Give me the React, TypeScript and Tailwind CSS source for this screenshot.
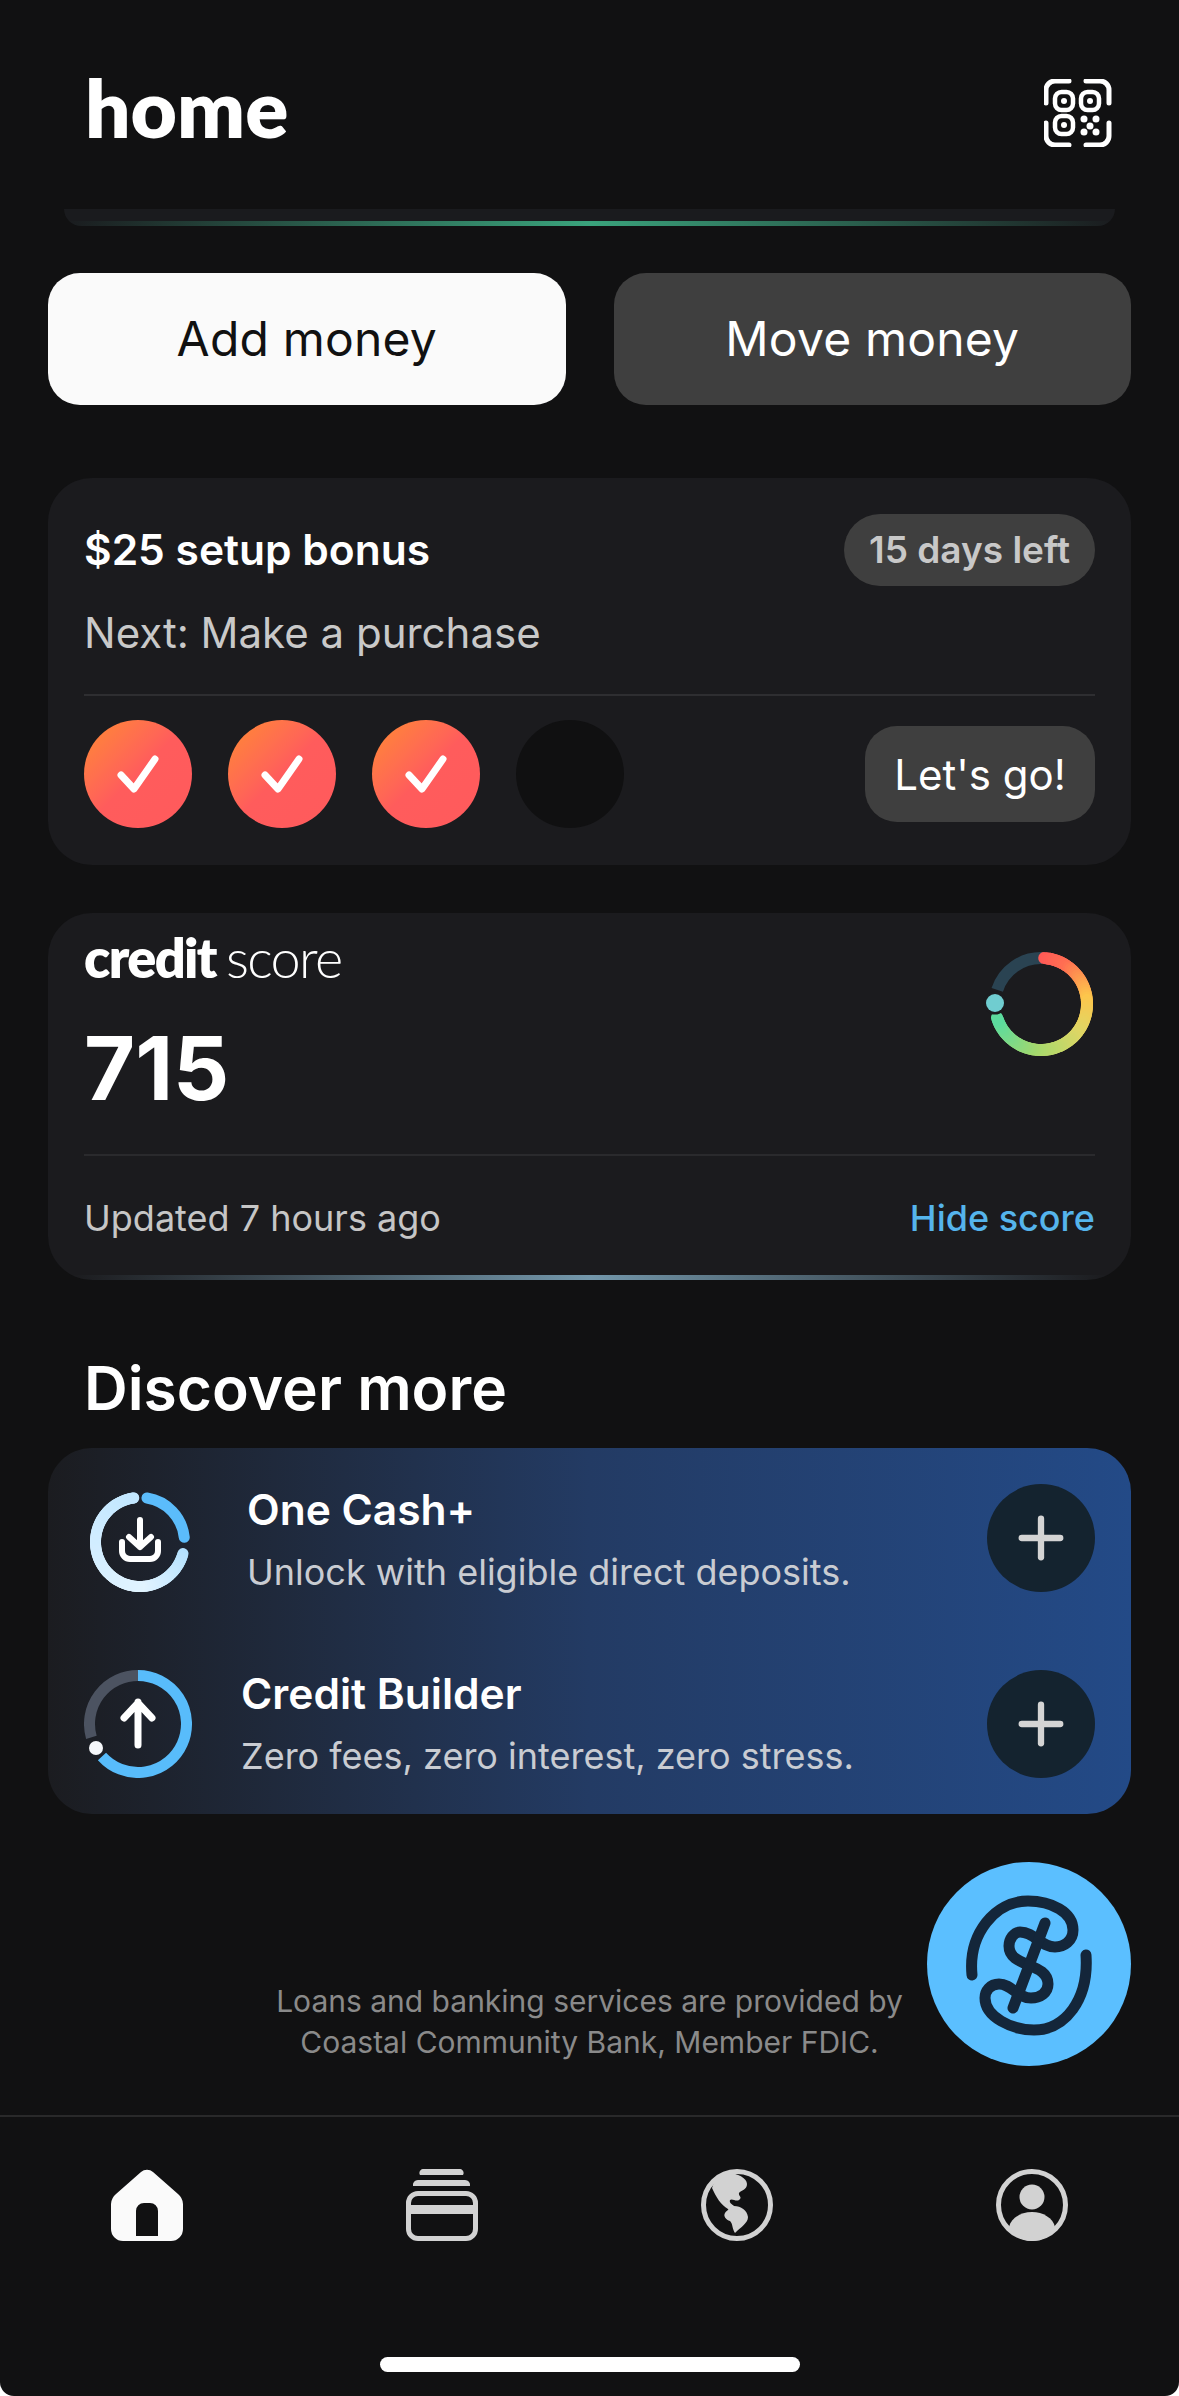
import { Plus } from "lucide-react";

type Stop = [number, string];

function hexToRgb(hex: string) {
  return [1, 3, 5].map((i) => parseInt(hex.slice(i, i + 2), 16));
}

function colorAt(stops: Stop[], t: number) {
  for (let i = 0; i < stops.length - 1; i++) {
    const [a, ca] = stops[i];
    const [b, cb] = stops[i + 1];
    if (t <= b) {
      const k = (t - a) / (b - a);
      const x = hexToRgb(ca);
      const y = hexToRgb(cb);
      return `rgb(${x.map((v, j) => Math.round(v + (y[j] - v) * k)).join(",")})`;
    }
  }
  return stops[stops.length - 1][1];
}

function polar(cx: number, cy: number, r: number, deg: number) {
  const rad = ((deg - 90) * Math.PI) / 180;
  return [cx + r * Math.cos(rad), cy + r * Math.sin(rad)];
}

function arcPath(cx: number, cy: number, r: number, from: number, to: number) {
  const [x1, y1] = polar(cx, cy, r, from);
  const [x2, y2] = polar(cx, cy, r, to);
  return `M${x1} ${y1}A${r} ${r} 0 ${to - from > 180 ? 1 : 0} 1 ${x2} ${y2}`;
}

function GradientArc(props: { cx: number; cy: number; r: number; from: number; to: number; width: number; stops: Stop[] }) {
  const { cx, cy, r, from, to, width, stops } = props;
  const parts = [];
  const step = 3;
  for (let a = from; a < to; a += step) {
    const end = Math.min(a + step + 0.5, to);
    parts.push(
      <path key={a} d={arcPath(cx, cy, r, a, end)} fill="none" stroke={colorAt(stops, a)} strokeWidth={width} strokeLinecap="round" />
    );
  }
  return <g>{parts}</g>;
}

function QrIcon() {
  const corners = ["M2 24V11a9 9 0 0 1 9-9h14", "M42 2h14a9 9 0 0 1 9 9v13", "M2 44v13a9 9 0 0 0 9 9h14", "M42 66h14a9 9 0 0 0 9-9V44"];
  return (
    <svg width="68" height="68" viewBox="0 0 68 68" fill="none" stroke="#fff" strokeWidth="5" strokeLinecap="round">
      {corners.map((d) => (
        <path key={d} d={d} />
      ))}
      <rect x="11" y="13" width="18" height="18" rx="6.5" strokeWidth="4.5" />
      <rect x="37" y="13" width="18" height="18" rx="6.5" strokeWidth="4.5" />
      <rect x="11" y="37" width="18" height="18" rx="6.5" strokeWidth="4.5" />
      <g fill="#fff" stroke="none">
        <circle cx="20" cy="22" r="3" />
        <circle cx="46" cy="22" r="3" />
        <circle cx="20" cy="46" r="3" />
        <circle cx="40" cy="40" r="3.5" />
        <circle cx="52" cy="40" r="3.5" />
        <circle cx="46" cy="47" r="3.5" />
        <circle cx="40" cy="53" r="3.5" />
        <circle cx="52" cy="53" r="3.5" />
      </g>
    </svg>
  );
}

function CheckDot() {
  return (
    <div className="flex h-[108px] w-[108px] items-center justify-center rounded-full bg-gradient-to-br from-[#ff8a2a] via-[#ff5c5c] via-50% to-[#ff5a5c]">
      <svg width="108" height="108" viewBox="0 0 108 108" fill="none" stroke="#fff" strokeWidth="7" strokeLinecap="round" strokeLinejoin="round">
        <path d="M37 55 50 69 71 39" />
      </svg>
    </div>
  );
}

function ScoreRing() {
  return (
    <svg width="116" height="116" viewBox="0 0 116 116" className="shrink-0">
      <path d={arcPath(58, 58, 46, 288, 362)} fill="none" stroke="#2a4352" strokeWidth="12" />
      <GradientArc
        cx={58}
        cy={58}
        r={46}
        from={4}
        to={253}
        width={12}
        stops={[
          [0, "#ff5757"],
          [35, "#ff6f52"],
          [85, "#fdc64c"],
          [130, "#dfd665"],
          [190, "#a5d96d"],
          [253, "#58dba0"],
        ]}
      />
      <circle cx="12" cy="57" r="11.5" fill="#1b1b1e" />
      <circle cx="12" cy="57" r="9" fill="#70cdd0" />
    </svg>
  );
}

function CashIcon() {
  return (
    <svg width="108" height="108" viewBox="0 0 108 108" fill="none" strokeLinecap="round" strokeLinejoin="round" className="shrink-0">
      <path d={arcPath(54, 54, 44.5, 9, 84)} stroke="#5bbcfb" strokeWidth="11" />
      <GradientArc
        cx={54}
        cy={54}
        r={44.5}
        from={105}
        to={352}
        width={11}
        stops={[
          [105, "#b4e1fe"],
          [180, "#e2f4ff"],
          [270, "#d2edff"],
          [352, "#c2e7ff"],
        ]}
      />
      <g stroke="#fff" strokeWidth="6">
        <path d="M54 32v27M43 49l11 10 11-10" />
        <path d="M36 54v9a8 8 0 0 0 8 8h20a8 8 0 0 0 8-8V54" />
      </g>
    </svg>
  );
}

function BuilderIcon() {
  return (
    <svg width="108" height="108" viewBox="0 0 108 108" fill="none" strokeLinecap="round" strokeLinejoin="round" className="shrink-0">
      <path d={arcPath(54, 54, 48.5, 254, 360)} stroke="#4c5361" strokeWidth="11" strokeLinecap="butt" />
      <path d={arcPath(54, 54, 48.5, 0, 228)} stroke="#58bcfb" strokeWidth="11" strokeLinecap="butt" />
      <circle cx="12" cy="78" r="7" fill="#f5f7fa" />
      <path d="M54 75V32M40 48l14-15 14 15" stroke="#fff" strokeWidth="7" />
    </svg>
  );
}

function PlusButton() {
  return (
    <div className="flex h-[108px] w-[108px] shrink-0 items-center justify-center rounded-full bg-[#14232f]">
      <Plus size={66} strokeWidth={2.3} className="text-[#d4d4d4]" />
    </div>
  );
}

function SpendLogo() {
  return (
    <svg width="204" height="204" viewBox="0 0 204 204" fill="none" stroke="#14263a" strokeWidth="11" strokeLinecap="round" strokeLinejoin="round">
      <path d="M45 113C41 72 68 39 101 39C124 39 146 50 146 68C146 79 137 85 128 85C113 85 108 70 93 70C87 70 82 77 82 84C82 106 121 100 121 122C121 131 113 136 104 136C90 136 85 122 72 122C63 122 58 129 58 136C58 155 85 168 107 168C138 168 162 138 159 93" />
      <path d="M118 61 86 146" />
    </svg>
  );
}

function HomeIcon() {
  return (
    <svg width="72" height="72" viewBox="0 0 72 72">
      <path
        fill="#fafafa"
        fillRule="evenodd"
        d="M30 3a9 9 0 0 1 12 0l25 22a14 14 0 0 1 5 10v25a12 12 0 0 1-12 12H12A12 12 0 0 1 0 60V35a14 14 0 0 1 5-10ZM25 67h22V42a8 8 0 0 0-8-8h-6a8 8 0 0 0-8 8Z"
      />
    </svg>
  );
}

function CardsIcon() {
  return (
    <svg width="72" height="72" viewBox="0 0 72 72" fill="#d2d2d2">
      <path d="M18 0h35a4 4 0 0 1 4 6H14a4 4 0 0 1 4-6Z" />
      <path d="M12 11h47a5 5 0 0 1 5 6H7a5 5 0 0 1 5-6Z" />
      <path
        fillRule="evenodd"
        d="M12 22h48a12 12 0 0 1 12 12v26a12 12 0 0 1-12 12H12A12 12 0 0 1 0 60V34a12 12 0 0 1 12-12Zm0 5a7 7 0 0 0-7 7v2h62v-2a7 7 0 0 0-7-7ZM5 45v15a7 7 0 0 0 7 7h48a7 7 0 0 0 7-7V45Z"
      />
    </svg>
  );
}

function GlobeIcon() {
  return (
    <svg width="72" height="72" viewBox="0 0 72 72">
      <circle cx="36" cy="36" r="33.5" fill="none" stroke="#d2d2d2" strokeWidth="5" />
      <path
        fill="#d2d2d2"
        d="M11 19C14 10 20 5 28 4C36 4 46 9 46 15C46 21 40 21 38 24C37 27 42 28 38 31C35 33 31 29 29 31C28 34 31 35 33 37C40 37 46 41 47 48C47 54 40 58 34 64C31 60 32 55 29 52C25 51 22 47 24 44C26 41 28 41 27 40C20 36 15 28 11 19Z"
      />
    </svg>
  );
}

function ProfileIcon() {
  return (
    <svg width="72" height="72" viewBox="0 0 72 72">
      <circle cx="36" cy="36" r="33.5" fill="none" stroke="#d2d2d2" strokeWidth="5" />
      <circle cx="36" cy="28" r="12.5" fill="#d2d2d2" />
      <path fill="#d2d2d2" d="M13 58c2-9 12-15 23-15s21 6 23 15C54 67 46 72 36 72S18 67 13 58Z" />
    </svg>
  );
}

export default function App() {
  return (
    <div className="relative flex h-[2396px] w-[1179px] flex-col overflow-hidden rounded-b-[14px] bg-[#111112] font-['Inter',sans-serif] text-white">
      <header className="flex h-[209px] shrink-0 items-start justify-between pl-[85px] pr-[67px]">
        <h1 className="mt-[67px] text-[80px] leading-[80px] font-extrabold font-['Lato',sans-serif]">home</h1>
        <div className="mt-[79px]">
          <QrIcon />
        </div>
      </header>

      <div className="mx-[64px] flex h-[17px] shrink-0 items-end overflow-hidden rounded-b-[24px] bg-[#1a1b1e]">
        <div className="h-[5px] w-full bg-gradient-to-r from-transparent via-[#3aa37c] to-transparent" />
      </div>

      <div className="mx-[48px] mt-[47px] flex h-[132px] shrink-0 gap-[48px] text-[48px] tracking-[0.004em]">
        <button className="flex-1 rounded-[32px] bg-[#fafafa] text-[#111]">Add money</button>
        <button className="flex-1 rounded-[32px] bg-[#3f3f3f] text-white">Move money</button>
      </div>

      <section className="mx-[48px] mt-[73px] h-[387px] shrink-0 rounded-[44px] bg-[#1b1b1e] px-[36px] pt-[36px]">
        <div className="flex h-[72px] items-center justify-between">
          <span className="text-[42.5px] font-semibold">$25 setup bonus</span>
          <span className="flex h-[72px] items-center rounded-full bg-[#3f3f3f] px-[25px] text-[37px] font-semibold text-[#c8c8c8]">15 days left</span>
        </div>
        <div className="mt-[22px] text-[42px] leading-[50px] text-[#c9c9c9]">Next: Make a purchase</div>
        <div className="mt-[36px] h-[2px] bg-[#2e2e31]" />
        <div className="mt-[24px] flex items-center justify-between">
          <div className="flex gap-[36px]">
            <CheckDot />
            <CheckDot />
            <CheckDot />
            <div className="h-[108px] w-[108px] rounded-full bg-[#101011]" />
          </div>
          <button className="flex h-[96px] w-[230px] items-center justify-center rounded-[32px] bg-[#3f3f3f] text-[42px]">Let's go!</button>
        </div>
      </section>

      <section className="relative mx-[48px] mt-[48px] h-[367px] shrink-0 overflow-hidden rounded-[44px] bg-[#1b1b1e] px-[36px]">
        <div className="flex justify-between">
          <div>
            <div className="mt-[17px] flex items-baseline gap-[10px] text-[54px] leading-[56px] tracking-[-0.03em] font-['Lato',sans-serif]">
              <span className="font-extrabold">credit</span>
              <span className="font-light">score</span>
            </div>
            <div className="mt-[32px] text-[88px] leading-[100px] font-bold">715</div>
          </div>
          <div className="mt-[33px] -mr-[4px]">
            <ScoreRing />
          </div>
        </div>
        <div className="mt-[36px] h-[2px] bg-[#2a2a2d]" />
        <div className="mt-[37px] flex items-center justify-between text-[36px] leading-[50px]">
          <span className="text-[#c6c6c6]">Updated 7 hours ago</span>
          <span className="font-medium text-[#55b4ec]">Hide score</span>
        </div>
        <div className="absolute inset-x-[24px] bottom-0 h-[5px] bg-gradient-to-r from-transparent via-[#7397ab] to-transparent" />
      </section>

      <h2 className="mx-[84px] mt-[76px] h-[92px] shrink-0 text-[60.5px] leading-[64px] font-semibold">Discover more</h2>

      <section className="mx-[48px] flex h-[366px] shrink-0 flex-col rounded-[44px] bg-gradient-to-r from-[#1b1c20] via-[#233b64] via-50% to-[#234a87] pr-[36px]">
        <div className="mt-[36px] flex h-[108px] items-center">
          <div className="ml-[38px] mt-[8px]">
            <CashIcon />
          </div>
          <div className="ml-[53px] mt-[6px] flex-1">
            <div className="text-[42.5px] leading-[50px] font-semibold">One Cash+</div>
            <div className="mt-[12px] text-[36px] leading-[50px] text-[#c9ccd2]">Unlock with eligible direct deposits.</div>
          </div>
          <PlusButton />
        </div>
        <div className="mt-[78px] flex h-[108px] items-center">
          <div className="ml-[36px]">
            <BuilderIcon />
          </div>
          <div className="ml-[49px] mt-[2px] flex-1">
            <div className="text-[42.5px] leading-[50px] font-semibold">Credit Builder</div>
            <div className="mt-[12px] text-[36px] leading-[50px] text-[#c9ccd2]">Zero fees, zero interest, zero stress.</div>
          </div>
          <PlusButton />
        </div>
      </section>

      <footer className="mt-[167px] w-[1179px] shrink-0 text-center text-[30px] leading-[41px] text-[#8a8a8a]">
        Loans and banking services are provided by
        <br />
        Coastal Community Bank, Member FDIC.
      </footer>

      <div className="absolute top-[1862px] left-[927px] h-[204px] w-[204px] rounded-full bg-[#5bbfff]">
        <SpendLogo />
      </div>

      <nav className="mt-auto h-[281px] shrink-0 border-t-2 border-[#29292a] pt-[52px]">
        <div className="grid h-[72px] grid-cols-4 justify-items-center">
          <HomeIcon />
          <CardsIcon />
          <GlobeIcon />
          <ProfileIcon />
        </div>
        <div className="mx-auto mt-[116px] h-[15px] w-[420px] rounded-full bg-white" />
      </nav>
    </div>
  );
}
